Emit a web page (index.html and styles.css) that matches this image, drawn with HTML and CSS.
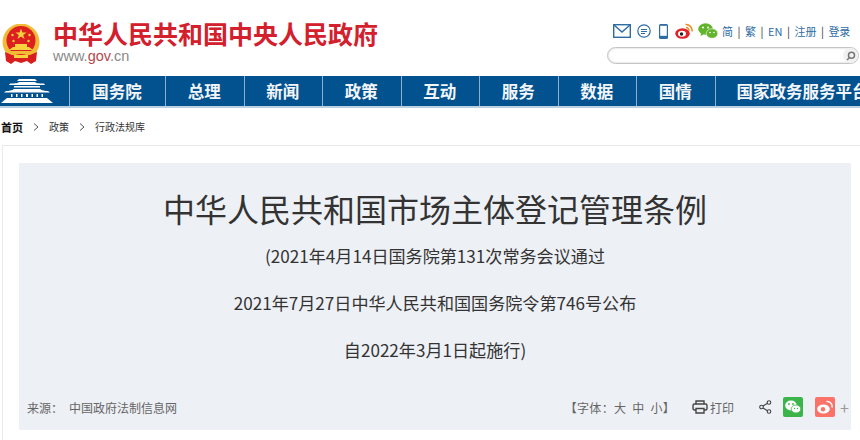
FILE: index.html
```html
<!DOCTYPE html>
<html lang="zh-CN">

<head>
    <meta charset="UTF-8">
    <title>中华人民共和国市场主体登记管理条例</title>
    <link rel="stylesheet" href="styles.css">
</head>

<body>
    <header class="header">
        <div class="brand">
            <svg class="emblem" width="40" height="41" viewBox="0 0 40 41">
                <circle cx="20" cy="18" r="18.500" fill="#f2bb35" />
                <circle cx="20" cy="16.500" r="14.500" fill="#dd1f1f" />
                <path d="M20 4.500l1.400 4h4.200l-3.400 2.500 1.300 4-3.500-2.500-3.500 2.500 1.300-4L14.400 8.500h4.200z" fill="#f7d23e" />
                <circle cx="11.500" cy="11" r="1.200" fill="#f7d23e" />
                <circle cx="28.500" cy="11" r="1.200" fill="#f7d23e" />
                <circle cx="12.500" cy="17" r="1.200" fill="#f7d23e" />
                <circle cx="27.500" cy="17" r="1.200" fill="#f7d23e" />
                <path d="M8 26h24l-4-3H26v-3H14v3h-2z" fill="#f7d23e" />
                <path d="M6 27h28v3H6z" fill="#f2bb35" />
                <path d="M4 28l7 3 9 1 9-1 7-3-1 9-5 3-4-3-6 2-6-2-4 3-5-3z" fill="#d81e1e" />
                <path d="M13 31h14v3H13z" fill="#f7d23e" />
            </svg>
            <div class="brand-text">
                <div class="site-name">中华人民共和国中央人民政府</div>
                <div class="site-url">www.<span class="site-url-gov">gov</span>.cn</div>
            </div>
        </div>
        <div class="tools">
            <div class="tool-row">
                <svg width="18" height="14" viewBox="0 0 18 14" fill="none" stroke="#2e6da4" stroke-width="1.400">
                    <rect x="0.700" y="0.700" width="16.600" height="12.600" />
                    <path d="M1 1l8 7 8-7" />
                </svg>
                <svg class="tool-gap" width="14" height="14" viewBox="0 0 14 14" fill="none" stroke="#2e6da4" stroke-width="1.200">
                    <circle cx="7" cy="7" r="6.200" />
                    <path d="M4 5.500h6M4 7.500h6M4 9.500h4" stroke-width="1" />
                </svg>
                <svg class="tool-gap-lg" width="9" height="15" viewBox="0 0 9 15">
                    <rect x="0" y="0" width="9" height="15" rx="1.500" fill="#2e6da4" />
                    <rect x="1.200" y="1.800" width="6.600" height="10" fill="#fff" />
                </svg>
                <svg class="tool-gap-md" width="18" height="16" viewBox="0 0 18 16">
                    <ellipse cx="7.500" cy="10.500" rx="7.300" ry="5.200" fill="#e0242a" />
                    <ellipse cx="7" cy="10.800" rx="4" ry="3" fill="#fff" />
                    <circle cx="6.500" cy="11" r="1.700" fill="#222" />
                    <path d="M10.500 1.500a6 6 0 0 1 6.500 7" fill="none" stroke="#f08a1d" stroke-width="1.500" />
                    <path d="M11 4.500a3 3 0 0 1 3 3.500" fill="none" stroke="#f08a1d" stroke-width="1.300" />
                </svg>
                <svg class="tool-gap-sm" width="20" height="16" viewBox="0 0 20 16">
                    <ellipse cx="7.500" cy="6" rx="7.300" ry="5.800" fill="#62b42c" />
                    <path d="M3 10l-0.500 3 3-1.500z" fill="#62b42c" />
                    <ellipse cx="14" cy="10.500" rx="5.800" ry="4.800" fill="#62b42c" stroke="#fff" stroke-width="0.600" />
                    <circle cx="5" cy="4.500" r="1" fill="#fff" />
                    <circle cx="10" cy="4.500" r="1" fill="#fff" />
                    <circle cx="12" cy="9.500" r="0.800" fill="#fff" />
                    <circle cx="16" cy="9.500" r="0.800" fill="#fff" />
                </svg>
                <div class="tool-links">
                    <span>简</span><i>|</i><span>繁</span><i>|</i><span>EN</span><i>|</i><span>注册</span><i>|</i><span>登录</span>
                </div>
            </div>
            <div class="search">
                <div class="search-btn">
                    <svg width="10" height="10" viewBox="0 0 10 10" fill="none" stroke="#777" stroke-width="1.500">
                        <circle cx="5.500" cy="4.200" r="3" />
                        <path d="M3.500 6.500L1 9" />
                    </svg>
                </div>
            </div>
        </div>
    </header>

    <nav class="nav">
        <div class="nav-home">
            <svg width="52" height="24" viewBox="0 0 52 24" fill="#fff">
                <path d="M18 0h16l2 2H16zM9 4.500c6 0 8-.5 9-1.500h16c1 1 3 1.500 9 1.500l1 1.500H8z" />
                <path d="M13 7h26v1.500H13z" />
                <path d="M5 12c3 0 6-.5 8-2h26c2 1.500 5 2 8 2l2 1.500H3z" />
                <path d="M10 15h1.500v3H10zM15 15h1.500v3H15zM20 15h1.500v3H20zM25 15h2v3h-2zM30.500 15H32v3h-1.500zM35.500 15H37v3h-1.500zM40.500 15H42v3h-1.500z" />
                <path d="M6 19h40l6 5H0z" />
            </svg>
        </div>
        <a class="nav-item nav-item-first">国务院</a>
        <a class="nav-item">总理</a>
        <a class="nav-item">新闻</a>
        <a class="nav-item">政策</a>
        <a class="nav-item">互动</a>
        <a class="nav-item">服务</a>
        <a class="nav-item">数据</a>
        <a class="nav-item">国情</a>
        <a class="nav-item nav-item-last">国家政务服务平台</a>
    </nav>

    <div class="crumbs">
        <b>首页</b>
        <svg width="6" height="8" viewBox="0 0 6 8" fill="none" stroke="#555"><path d="M1 .5L5 4 1 7.500" /></svg>
        <span>政策</span>
        <svg width="6" height="8" viewBox="0 0 6 8" fill="none" stroke="#555"><path d="M1 .5L5 4 1 7.500" /></svg>
        <span>行政法规库</span>
    </div>

    <main class="card">
        <section class="law">
            <h1 class="law-title">中华人民共和国市场主体登记管理条例</h1>
            <p class="law-note">(2021年4月14日国务院第131次常务会议通过</p>
            <p class="law-note">2021年7月27日中华人民共和国国务院令第746号公布</p>
            <p class="law-note">自2022年3月1日起施行)</p>
            <div class="law-foot">
                <div class="source"><span>来源：</span><span>中国政府法制信息网</span></div>
                <div class="actions">
                    <span class="font-size">【字体：大&nbsp;&nbsp;中&nbsp;&nbsp;小】</span>
                    <span class="print">
                        <svg width="16" height="14" viewBox="0 0 16 14" fill="none" stroke="#444" stroke-width="1.400">
                            <path d="M4 4V1h8v3" />
                            <rect x="1" y="4" width="14" height="6" rx="1.500" />
                            <path d="M4 8.500h8V13H4z" fill="#edf0f5" />
                        </svg>
                        打印
                    </span>
                    <svg class="share" width="13" height="14" viewBox="0 0 13 14" fill="none" stroke="#444" stroke-width="1.100">
                        <circle cx="2.500" cy="7" r="1.800" />
                        <circle cx="10" cy="2.500" r="1.800" />
                        <circle cx="10" cy="11.500" r="1.800" />
                        <path d="M4 6l4.500-2.700M4 8l4.500 2.700" />
                    </svg>
                    <span class="share-btn share-wechat">
                        <svg width="16" height="14" viewBox="0 0 16 14">
                            <ellipse cx="6" cy="5.500" rx="5.800" ry="5" fill="#fff" />
                            <ellipse cx="11" cy="9" rx="4.800" ry="4" fill="#fff" stroke="#3bb54a" stroke-width="0.800" />
                            <circle cx="4" cy="4" r="0.900" fill="#3bb54a" />
                            <circle cx="8" cy="4" r="0.900" fill="#3bb54a" />
                            <circle cx="9.500" cy="8.500" r="0.700" fill="#3bb54a" />
                            <circle cx="12.500" cy="8.500" r="0.700" fill="#3bb54a" />
                        </svg>
                    </span>
                    <span class="share-btn share-weibo">
                        <svg width="16" height="14" viewBox="0 0 16 14">
                            <ellipse cx="6.500" cy="9" rx="6.300" ry="4.600" fill="#fff" />
                            <circle cx="6" cy="9.300" r="2.200" fill="#fa7268" />
                            <path d="M9.500 1.500a5 5 0 0 1 5.500 6" fill="none" stroke="#fff" stroke-width="1.400" />
                        </svg>
                    </span>
                    <span class="share-more">+</span>
                </div>
            </div>
        </section>
    </main>
</body>

</html>
```

FILE: styles.css
```css
body {
    margin: 0;
    width: 860px;
    height: 440px;
    overflow: hidden;
    background: white;
    font-family: "Noto Sans CJK SC", "Liberation Sans", sans-serif;
}

.header {
    display: flex;
    justify-content: space-between;
    height: 76px;
}

.brand {
    display: flex;
    align-items: flex-start;
    padding: 21px 0 0 1px;
}

.emblem {
    margin-right: 12px;
    margin-top: 3px;
}

.site-name {
    font-size: 25px;
    line-height: 25px;
    font-weight: 700;
    color: #d3202c;
}

.site-url {
    font-family: "Liberation Sans", sans-serif;
    font-size: 14.500px;
    line-height: 16px;
    margin-top: 2px;
    color: #888;
}

.site-url-gov {
    color: #b5484c;
}

.tools {
    width: 252px;
    margin-right: 1px;
    padding-top: 22px;
}

.tool-row {
    display: flex;
    align-items: center;
    height: 18px;
    padding-left: 6px;
}

.tool-gap {
    margin-left: 6px;
}

.tool-gap-sm {
    margin-left: 5px;
}

.tool-gap-md {
    margin-left: 7px;
}

.tool-gap-lg {
    margin-left: 8px;
}

.tool-links {
    display: flex;
    align-items: center;
    margin-left: 4px;
    font-size: 11px;
    color: #2e6da4;
}

.tool-links i {
    font-style: normal;
    margin: 0 4.500px;
    color: #333;
}

.search {
    display: flex;
    justify-content: flex-end;
    align-items: center;
    height: 17px;
    margin-top: 7px;
    box-sizing: border-box;
    border: 1px solid #c4c4c4;
    border-radius: 9px;
    box-shadow: inset 0 0 2px #bbb;
}

.search-btn {
    display: flex;
    align-items: center;
    justify-content: center;
    width: 15px;
    height: 15px;
    border-radius: 50%;
    background: #f1f1f1;
}

.nav {
    display: flex;
    height: 32px;
    box-sizing: border-box;
    background: #02528f;
    border-bottom: 2px solid #bcd0e2;
    white-space: nowrap;
}

.nav-home {
    display: flex;
    align-items: center;
    width: 69px;
    flex-shrink: 0;
    padding-left: 1px;
    box-sizing: border-box;
}

.nav-item {
    flex-shrink: 0;
    width: 78.500px;
    box-sizing: border-box;
    border-left: 1px solid #8fb0cc;
    padding-right: 1px;
    text-align: center;
    font-size: 16.500px;
    line-height: 30px;
    font-weight: 700;
    color: #f2f6fa;
}

.nav-item-first {
    width: 96px;
}

.nav-item-last {
    width: 176px;
}

.crumbs {
    display: flex;
    align-items: center;
    gap: 10px;
    height: 37px;
    padding-left: 1px;
    font-size: 10px;
    color: #333;
}

.crumbs b {
    font-size: 11px;
    color: #111;
}

.card {
    margin-left: 2px;
    padding: 17px 9px 0 16px;
    border-top: 1px solid #e9e9e9;
    border-left: 1px solid #e9e9e9;
    height: 295px;
}

.law {
    height: 267px;
    background: #edf0f5;
    text-align: center;
    color: #333;
}

.law-title {
    margin: 0 0 2px;
    padding-top: 23px;
    font-size: 32px;
    line-height: 44px;
    font-weight: 400;
}

.law-note {
    margin: 0;
    font-size: 17.100px;
    line-height: 47px;
    color: #333;
}

.law-foot {
    display: flex;
    justify-content: space-between;
    align-items: center;
    margin-top: 22px;
    padding: 0 2px 0 8px;
    font-size: 12px;
    color: #666;
}

.source {
    display: flex;
    gap: 6px;
}

.actions {
    display: flex;
    align-items: center;
}

.font-size {
    letter-spacing: 0.300px;
}

.print {
    display: flex;
    align-items: center;
    gap: 2px;
    margin-left: 17px;
    font-size: 12px;
}

.share {
    margin-left: 25px;
}

.share-btn {
    display: flex;
    align-items: center;
    justify-content: center;
    width: 20px;
    height: 20px;
    border-radius: 2px;
}

.share-wechat {
    margin-left: 11px;
    background: #3bb54a;
}

.share-weibo {
    margin-left: 12px;
    background: #fa7268;
}

.share-more {
    margin-left: 5px;
    font-size: 16px;
    color: #999;
}
```
